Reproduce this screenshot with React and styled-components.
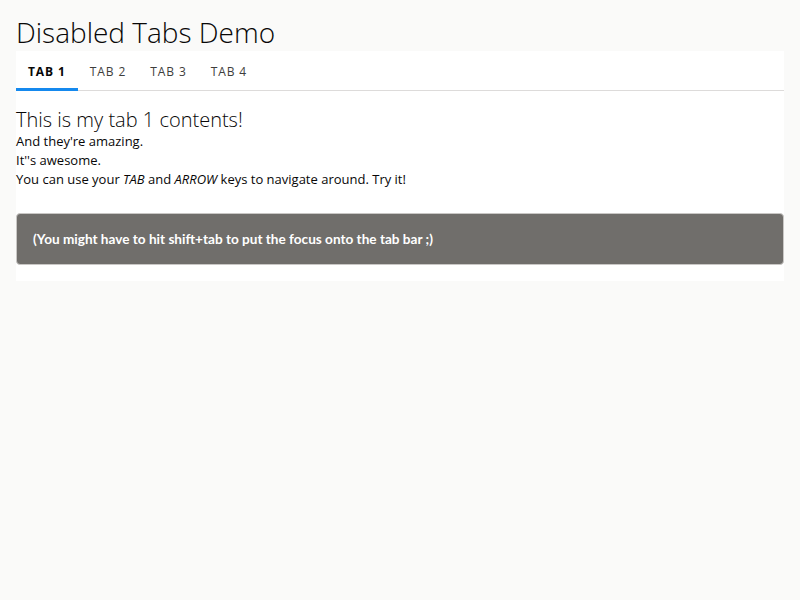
import React, { useState } from "react";
import styled, { createGlobalStyle } from "styled-components";

const GlobalStyle = createGlobalStyle`
  body {
    margin: 0;
    background: #fafaf9;
    font-family: "Open Sans", "Liberation Sans", sans-serif;
    color: #080707;
  }
`;

const tabs = ["Tab 1", "Tab 2", "Tab 3", "Tab 4"];

const App = () => {
  const [active, setActive] = useState(0);

  return (
    <>
      <GlobalStyle />
      <Page>
        <Title>Disabled Tabs Demo</Title>
        <Card>
          <TabBar role="tablist">
            {tabs.map((label, i) => (
              <Tab
                key={label}
                role="tab"
                active={i === active}
                onClick={() => setActive(i)}
              >
                {label}
              </Tab>
            ))}
          </TabBar>
          <Panel>
            <PanelHeading>This is my tab {active + 1} contents!</PanelHeading>
            <Line>And they're amazing.</Line>
            <Line>It''s awesome.</Line>
            <Line>
              You can use your <em>TAB</em> and <em>ARROW</em> keys to navigate
              around. Try it!
            </Line>
          </Panel>
          <Hint>(You might have to hit shift+tab to put the focus onto the tab bar ;)</Hint>
        </Card>
      </Page>
    </>
  );
};

export default App;

const Page = styled.div`
  padding: 14px 16px 16px;
`;

const Title = styled.h1`
  margin: 0;
  font-size: 28px;
  font-weight: 300;
  line-height: 37px;
  color: #080707;
`;

const Card = styled.div`
  background: #fff;
  padding-bottom: 16px;
`;

const TabBar = styled.div`
  display: flex;
  height: 39px;
  border-bottom: 1px solid #dddbda;
`;

const Tab = styled.button`
  position: relative;
  border: none;
  background: none;
  padding: 2px 12px 0;
  font-family: inherit;
  font-size: 12px;
  letter-spacing: 0.9px;
  text-transform: uppercase;
  font-weight: ${({ active }) => (active ? 700 : 400)};
  color: ${({ active }) => (active ? "#080707" : "#3e3e3c")};
  cursor: pointer;

  &::after {
    content: "";
    position: absolute;
    left: 0;
    right: 0;
    bottom: -1px;
    height: 3px;
    background: ${({ active }) => (active ? "#1589ee" : "transparent")};
  }
`;

const Panel = styled.div`
  padding: 16px 0 0;
`;

const PanelHeading = styled.h2`
  margin: 0;
  font-size: 20px;
  font-weight: 300;
  line-height: 25px;
`;

const Line = styled.p`
  margin: 0;
  font-size: 13px;
  line-height: 19px;
`;

const Hint = styled.div`
  margin-top: 24px;
  padding: 16px;
  background: #706e6b;
  border: 1px solid #c9c7c5;
  border-radius: 4px;
  color: #fff;
  font-family: Lato, "Open Sans", sans-serif;
  font-size: 13.6px;
  font-weight: 700;
  line-height: 18px;
`;
